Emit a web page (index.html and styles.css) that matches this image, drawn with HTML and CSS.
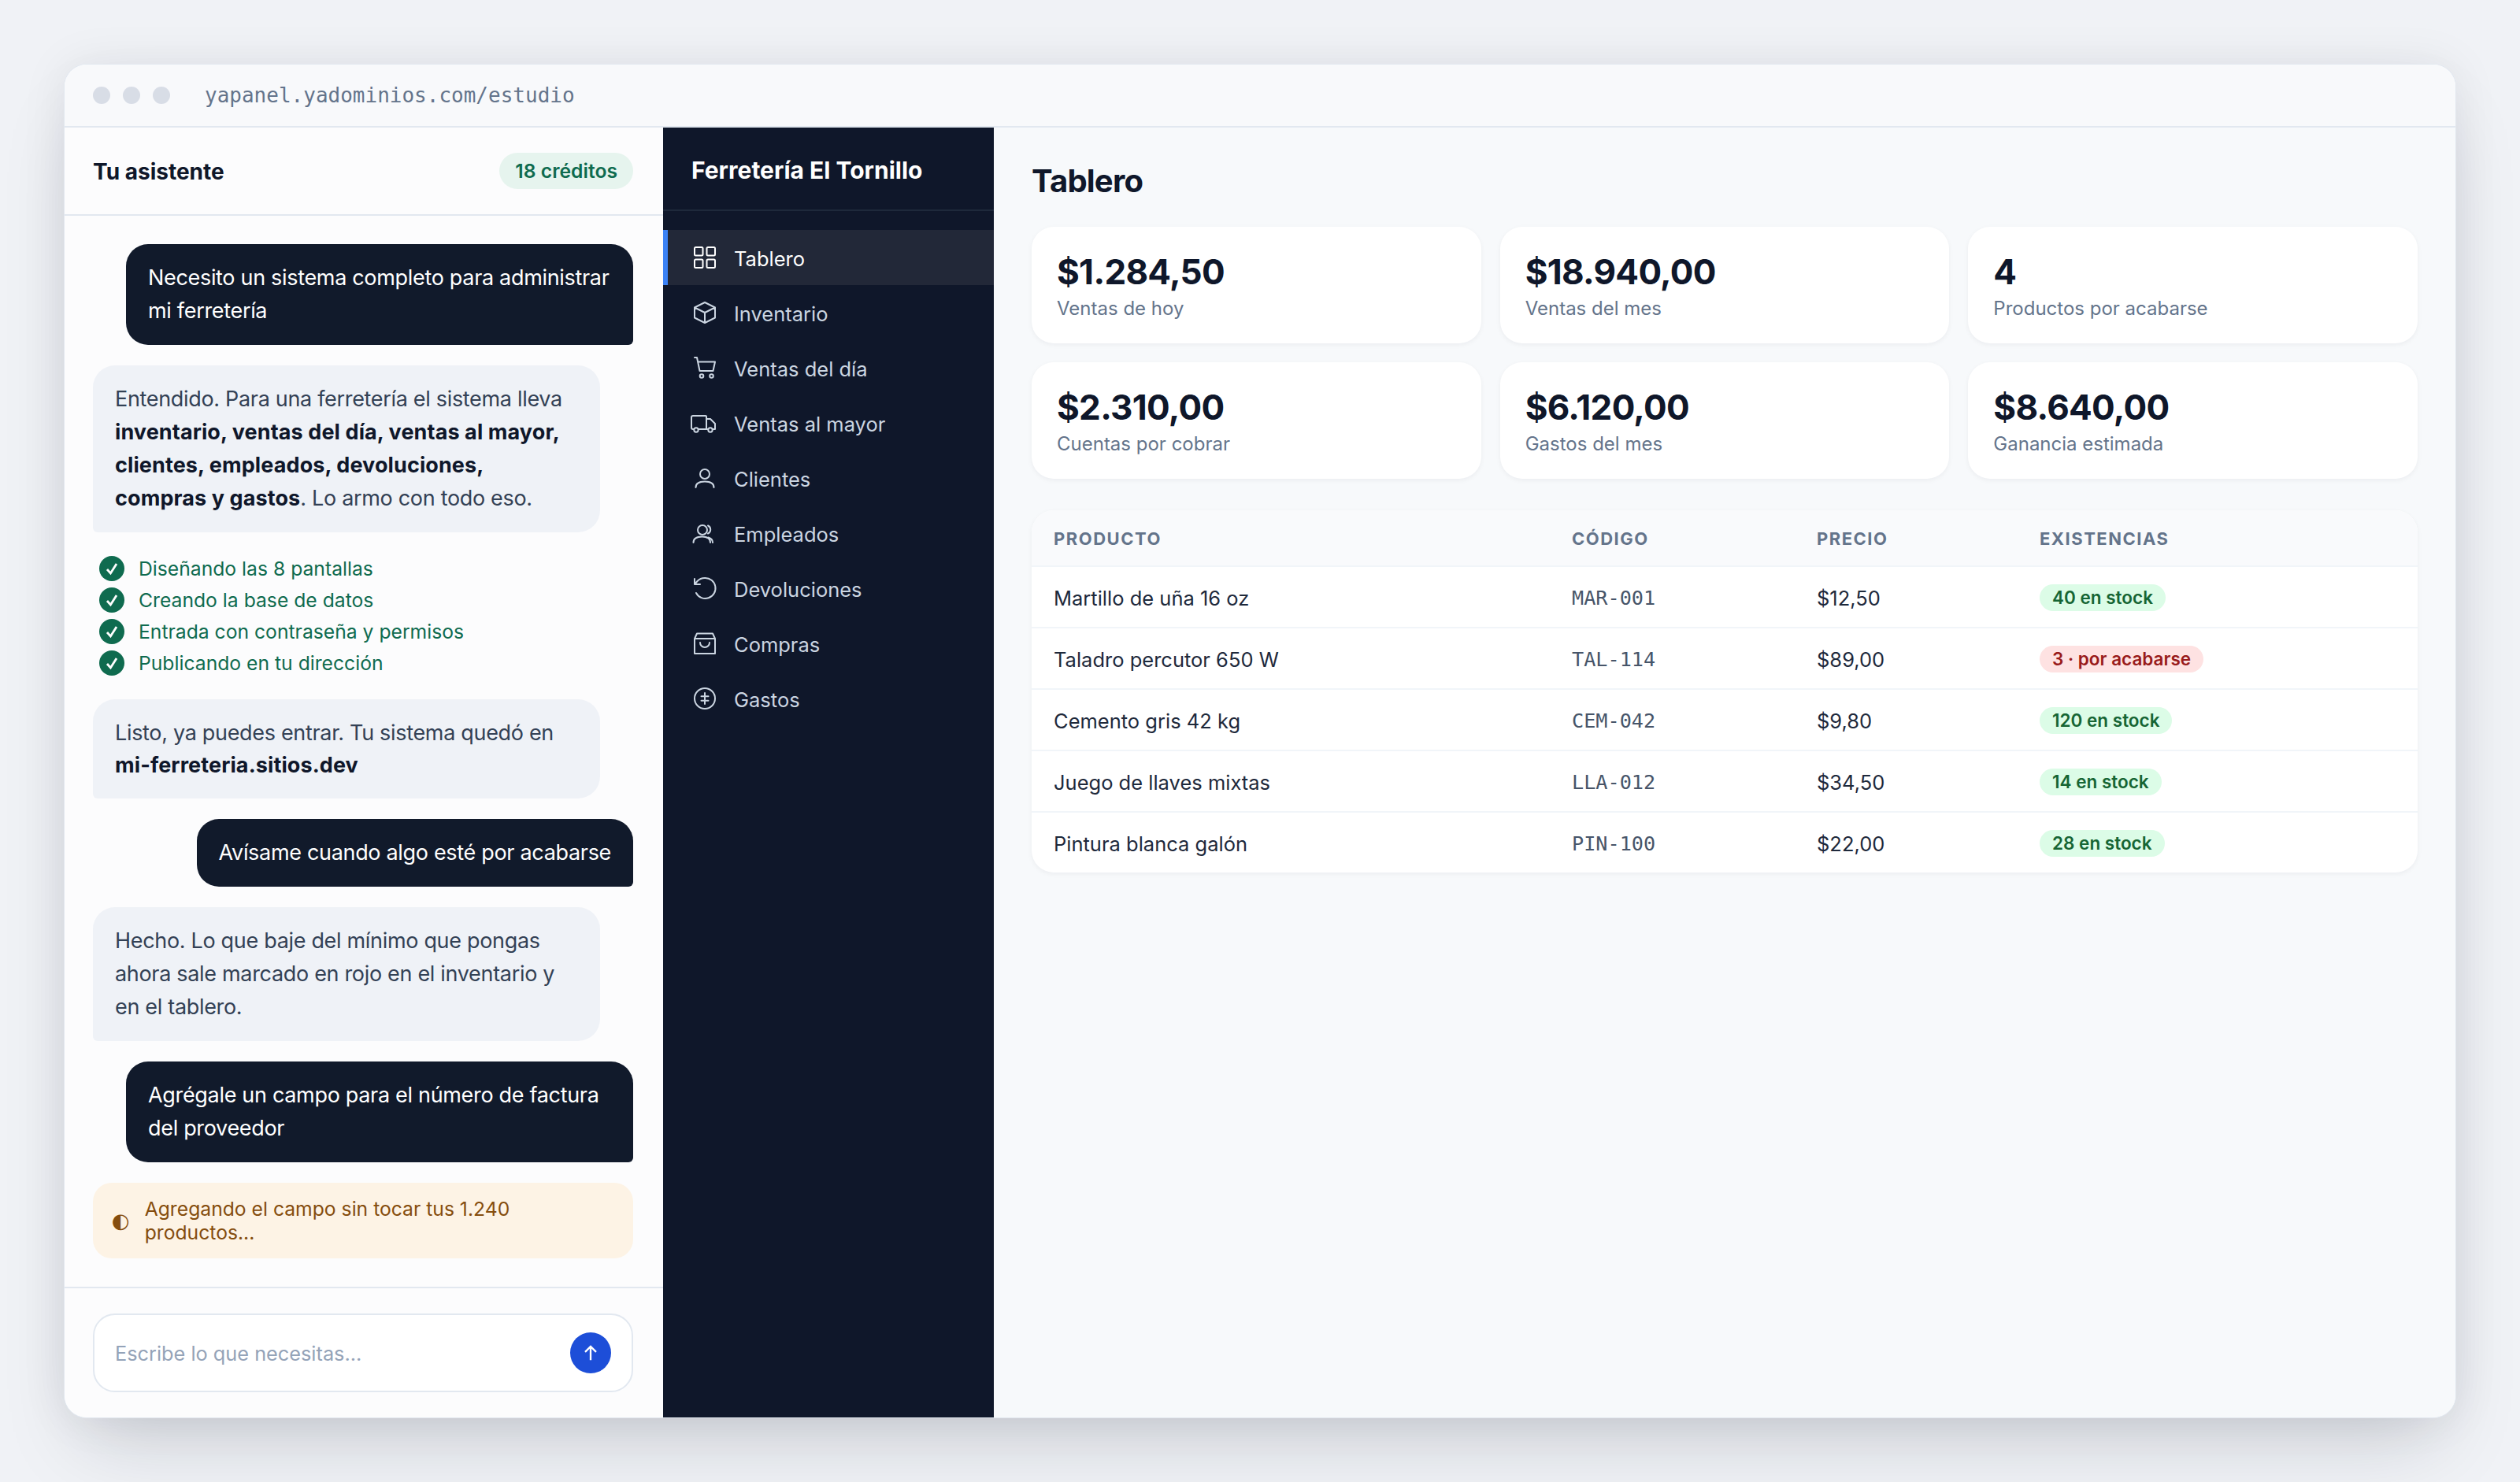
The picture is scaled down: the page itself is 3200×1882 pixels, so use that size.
FILE: index.html
```html
<!DOCTYPE html>
<html lang="es">
<head>
    <meta charset="UTF-8">
    <title>Estudio</title>
    <link rel="stylesheet" href="styles.css">
</head>
<body>
    <div class="window">
        <div class="titlebar">
            <div class="dots"><span></span><span></span><span></span></div>
            <div class="url">yapanel.yadominios.com/estudio</div>
        </div>

        <div class="app">
            <!-- Chat -->
            <section class="chat">
                <header class="chat-head">
                    <h2>Tu asistente</h2>
                    <span class="credits">18 créditos</span>
                </header>

                <div class="messages">
                    <div class="msg user">Necesito un sistema completo para administrar mi ferretería</div>
                    <div class="msg bot">Entendido. Para una ferretería el sistema lleva <strong>inventario, ventas del día, ventas al mayor, clientes, empleados, devoluciones, compras y gastos</strong>. Lo armo con todo eso.</div>
                    <ul class="steps">
                        <li><span class="check"><svg viewBox="0 0 16 16"><path d="M5 8.5l2.200 2.500L11 5"/></svg></span>Diseñando las 8 pantallas</li>
                        <li><span class="check"><svg viewBox="0 0 16 16"><path d="M5 8.5l2.200 2.500L11 5"/></svg></span>Creando la base de datos</li>
                        <li><span class="check"><svg viewBox="0 0 16 16"><path d="M5 8.5l2.200 2.500L11 5"/></svg></span>Entrada con contraseña y permisos</li>
                        <li><span class="check"><svg viewBox="0 0 16 16"><path d="M5 8.5l2.200 2.500L11 5"/></svg></span>Publicando en tu dirección</li>
                    </ul>
                    <div class="msg bot tight">Listo, ya puedes entrar. Tu sistema quedó en <strong>mi-ferreteria.sitios.dev</strong></div>
                    <div class="msg user">Avísame cuando algo esté por acabarse</div>
                    <div class="msg bot">Hecho. Lo que baje del mínimo que pongas ahora sale marcado en rojo en el inventario y en el tablero.</div>
                    <div class="msg user">Agrégale un campo para el número de factura del proveedor</div>
                    <div class="working">
                        <span class="spin">◐</span>
                        <span>Agregando el campo sin tocar tus 1.240 productos...</span>
                    </div>
                </div>

                <footer class="chat-foot">
                    <div class="input">
                        <span>Escribe lo que necesitas...</span>
                        <button class="send"><svg viewBox="0 0 24 24"><path d="M12 20V5M6 11l6-6 6 6"/></svg></button>
                    </div>
                </footer>
            </section>

            <!-- Menu del sistema -->
            <aside class="sidebar">
                <div class="brand">Ferretería El Tornillo</div>
                <nav class="nav">
                    <a class="active"><svg viewBox="0 0 28 28"><rect x="1" y="1" width="10.5" height="10.5" rx="1.5"/><rect x="16.5" y="1" width="10.5" height="10.5" rx="1.5"/><rect x="1" y="16.5" width="10.5" height="10.5" rx="1.5"/><rect x="16.5" y="16.5" width="10.5" height="10.5" rx="1.5"/></svg><span>Tablero</span></a>
                    <a><svg viewBox="0 0 28 28"><path d="M14 1l13 6.500v13L14 27 1 20.500v-13zM1 7.500L14 14l13-6.500M14 14v13"/></svg><span>Inventario</span></a>
                    <a><svg viewBox="0 0 28 28"><path d="M1 1h3l3.500 17h17M5.500 6.500H27l-2.500 11.500"/><circle cx="10" cy="24.500" r="2.300"/><circle cx="22.500" cy="24.500" r="2.300"/></svg><span>Ventas del día</span></a>
                    <a><svg viewBox="0 0 28 28"><path d="M-1 5h16a1 1 0 0 1 1 1v16H-1a2 2 0 0 1-2-2V7a2 2 0 0 1 2-2zM16 9h5l6 6v7H16"/><circle class="wheel" cx="3" cy="23" r="2.700"/><circle class="wheel" cx="21" cy="23" r="2.700"/></svg><span>Ventas al mayor</span></a>
                    <a><svg viewBox="0 0 28 28"><circle cx="14" cy="9" r="6"/><path d="M2.500 26c0-5 4.500-7.500 11.500-7.500s11.500 2.500 11.500 7.500"/></svg><span>Clientes</span></a>
                    <a><svg viewBox="0 0 28 28"><circle cx="11" cy="10" r="6"/><path d="M-.5 26c0-5 4.500-7.500 11-7.500S21 21 21 26M18.500 19.500c3.500 1 5.500 3.500 5.500 6.500M18 4.500a5.500 5.500 0 0 1 0 10"/></svg><span>Empleados</span></a>
                    <a><svg viewBox="0 0 28 28"><path d="M3 20A13 13 0 1 0 14 1 13 13 0 0 0 4.500 5L1 9M1 2v7h7"/></svg><span>Devoluciones</span></a>
                    <a><svg viewBox="0 0 28 28"><path d="M1 8l3-6.500h20L27 8v19H1zM1 8h26M8 13a6 6 0 0 0 12 0"/></svg><span>Compras</span></a>
                    <a><svg viewBox="0 0 28 28"><circle cx="14" cy="14" r="13"/><path d="M14 7v14M9.500 11.300h9M9.500 16.800h9"/></svg><span>Gastos</span></a>
                </nav>
            </aside>

            <!-- Tablero -->
            <main class="main">
                <h1>Tablero</h1>
                <div class="cards">
                    <div class="card"><b>$1.284,50</b><span>Ventas de hoy</span></div>
                    <div class="card"><b>$18.940,00</b><span>Ventas del mes</span></div>
                    <div class="card"><b>4</b><span>Productos por acabarse</span></div>
                    <div class="card"><b>$2.310,00</b><span>Cuentas por cobrar</span></div>
                    <div class="card"><b>$6.120,00</b><span>Gastos del mes</span></div>
                    <div class="card"><b>$8.640,00</b><span>Ganancia estimada</span></div>
                </div>

                <table class="stock">
                    <thead>
                        <tr><th class="col-prod">Producto</th><th class="col-code">Código</th><th class="col-price">Precio</th><th>Existencias</th></tr>
                    </thead>
                    <tbody>
                        <tr><td>Martillo de uña 16 oz</td><td class="code">MAR-001</td><td>$12,50</td><td><span class="badge">40 en stock</span></td></tr>
                        <tr><td>Taladro percutor 650 W</td><td class="code">TAL-114</td><td>$89,00</td><td><span class="badge low">3 · por acabarse</span></td></tr>
                        <tr><td>Cemento gris 42 kg</td><td class="code">CEM-042</td><td>$9,80</td><td><span class="badge">120 en stock</span></td></tr>
                        <tr><td>Juego de llaves mixtas</td><td class="code">LLA-012</td><td>$34,50</td><td><span class="badge">14 en stock</span></td></tr>
                        <tr><td>Pintura blanca galón</td><td class="code">PIN-100</td><td>$22,00</td><td><span class="badge">28 en stock</span></td></tr>
                    </tbody>
                </table>
            </main>
        </div>
    </div>
</body>
</html>
```

FILE: styles.css
```css
* {
    box-sizing: border-box;
}

html, body {
    margin: 0;
    height: 100%;
}

body {
    padding: 82px;
    background: #f0f2f6;
    font-family: 'Inter', sans-serif;
    overflow: hidden;
}

.window {
    height: 100%;
    display: flex;
    flex-direction: column;
    background: #fff;
    border-radius: 28px;
    overflow: hidden;
    box-shadow: 0 0 0 1px #e2e8f0, 0 50px 100px -24px rgba(15, 23, 42, 0.17), 0 0 60px rgba(15, 23, 42, 0.08);
}

.titlebar {
    height: 80px;
    flex: none;
    display: flex;
    align-items: center;
    gap: 44px;
    padding: 0 36px;
    background: #f8f9fb;
    border-bottom: 2px solid #e2e8f0;
}

.dots {
    display: flex;
    gap: 16px;
}

.dots span {
    width: 22px;
    height: 22px;
    border-radius: 50%;
    background: #d8dde6;
}

.url {
    font-family: 'DejaVu Sans Mono', monospace;
    font-size: 26px;
    color: #64748b;
}

.app {
    flex: 1;
    min-height: 0;
    display: flex;
}

/* Chat */
.chat {
    width: 760px;
    flex: none;
    display: flex;
    flex-direction: column;
    background: #fcfcfd;
}

.chat-head {
    height: 112px;
    flex: none;
    display: flex;
    align-items: center;
    justify-content: space-between;
    padding: 0 38px 0 36px;
    border-bottom: 2px solid #e2e8f0;
}

.chat-head h2 {
    margin: 0;
    padding-top: 2px;
    font-size: 28px;
    font-weight: 700;
    color: #0f172a;
}

.credits {
    padding: 8px 20px;
    border-radius: 24px;
    background: #e6f4ee;
    color: #0f6b4f;
    font-size: 24.7px;
    font-weight: 600;
    line-height: 30px;
}

.messages {
    flex: 1;
    min-height: 0;
    display: flex;
    flex-direction: column;
    gap: 26px;
    padding: 36px 38px 36px 36px;
}

.msg {
    max-width: 644px;
    padding: 22px 28px;
    border-radius: 28px;
    font-size: 27px;
    letter-spacing: -0.32px;
    line-height: 42px;
}

.msg.user {
    align-self: flex-end;
    background: #111a2b;
    color: #fff;
    border-bottom-right-radius: 6px;
}

.msg.bot {
    align-self: flex-start;
    width: 644px;
    background: #eff2f7;
    color: #334155;
    border-bottom-left-radius: 6px;
}

.msg.tight {
    line-height: 41px;
}

.msg strong {
    color: #0f172a;
    font-weight: 700;
    letter-spacing: 0.1px;
}

.steps {
    margin: 4px 0;
    padding: 0 0 0 8px;
    list-style: none;
    display: flex;
    flex-direction: column;
    gap: 8px;
}

.steps li {
    display: flex;
    align-items: center;
    gap: 18px;
    font-size: 24.7px;
    line-height: 32px;
    color: #0f6b4f;
}

.check {
    width: 32px;
    height: 32px;
    flex: none;
    border-radius: 50%;
    background: #0f6b4f;
}

.check svg {
    display: block;
    fill: none;
    stroke: #fff;
    stroke-width: 1.4;
}

.working {
    display: flex;
    align-items: center;
    gap: 19px;
    padding: 18px 26px 18px 24px;
    border-radius: 24px;
    background: #fdf3e5;
    color: #854d0e;
    font-size: 24.7px;
    line-height: 30px;
}

.spin {
    font-family: 'DejaVu Sans', sans-serif;
    font-size: 26px;
}

.chat-foot {
    flex: none;
    padding: 32px 38px 32px 36px;
    border-top: 2px solid #e2e8f0;
}

.input {
    height: 100px;
    display: flex;
    align-items: center;
    justify-content: space-between;
    padding: 0 26px;
    background: #fff;
    border: 2px solid #e2e8f0;
    border-radius: 28px;
    font-size: 25.3px;
    color: #94a3b8;
}

.send {
    width: 52px;
    height: 52px;
    padding: 12px;
    border: none;
    border-radius: 50%;
    background: #1d4ed8;
}

.send svg {
    display: block;
    fill: none;
    stroke: #fff;
    stroke-width: 2;
}

/* Menu */
.sidebar {
    width: 420px;
    flex: none;
    background: #0f172a;
}

.brand {
    height: 106px;
    display: flex;
    align-items: center;
    padding: 3px 0 0 36px;
    border-bottom: 2px solid #1e293b;
    color: #fff;
    font-size: 30px;
    font-weight: 700;
}

.nav {
    padding-top: 24px;
}

.nav a {
    height: 70px;
    display: flex;
    align-items: center;
    gap: 23px;
    padding-left: 33px;
    border-left: 6px solid transparent;
    color: #cbd5e1;
    font-size: 25.5px;
}

.nav a span {
    padding-top: 2px;
}

.nav a.active {
    border-left-color: #3b82f6;
    background: #222838;
    color: #fff;
}

.nav svg {
    width: 28px;
    height: 28px;
    flex: none;
    overflow: visible;
    fill: none;
    stroke: currentColor;
    stroke-width: 2;
    stroke-linecap: round;
    stroke-linejoin: round;
}

.nav svg .wheel {
    fill: #0f172a;
}

/* Tablero */
.main {
    flex: 1;
    min-width: 0;
    padding: 44px 48px;
    background: #f7f9fb;
}

.main h1 {
    margin: 0 0 34px;
    font-size: 40px;
    line-height: 48px;
    font-weight: 700;
    letter-spacing: -0.8px;
    color: #0f172a;
}

.cards {
    display: grid;
    grid-template-columns: repeat(3, 1fr);
    gap: 24px;
}

.card {
    height: 148px;
    display: flex;
    flex-direction: column;
    justify-content: center;
    padding: 0 32px;
    background: #fff;
    border-radius: 28px;
    box-shadow: 0 2px 6px rgba(15, 23, 42, 0.05);
}

.card b {
    font-size: 44px;
    line-height: 56px;
    font-weight: 700;
    letter-spacing: -0.7px;
    color: #0f172a;
}

.card span {
    margin-top: 3px;
    font-size: 24px;
    line-height: 32px;
    color: #64748b;
}

.stock {
    width: 100%;
    margin-top: 40px;
    border-collapse: separate;
    border-spacing: 0;
    table-layout: fixed;
    background: #fff;
    border-radius: 28px;
    box-shadow: 0 2px 6px rgba(15, 23, 42, 0.05);
    overflow: hidden;
}

.col-prod { width: 658px; }
.col-code { width: 311px; }
.col-price { width: 283px; }

.stock th {
    height: 72px;
    padding: 2px 28px 0;
    background: #f9fafc;
    border-bottom: 2px solid #f1f5f9;
    text-align: left;
    text-transform: uppercase;
    letter-spacing: 1.5px;
    font-size: 22px;
    font-weight: 700;
    color: #64748b;
}

.stock td {
    height: 78px;
    padding: 2px 28px 0;
    border-bottom: 2px solid #f1f5f9;
    font-size: 25.5px;
    color: #1e293b;
}

.stock tr:last-child td {
    height: 76px;
    border-bottom: none;
}

.stock .code {
    font-family: 'DejaVu Sans Mono', monospace;
    font-size: 25.2px;
    color: #475569;
}

.badge {
    display: inline-block;
    padding: 0 16px;
    border-radius: 17px;
    background: #dcfce7;
    color: #166534;
    font-size: 22.5px;
    font-weight: 600;
    line-height: 34px;
}

.badge.low {
    background: #fee2e2;
    color: #991b1b;
}
```
